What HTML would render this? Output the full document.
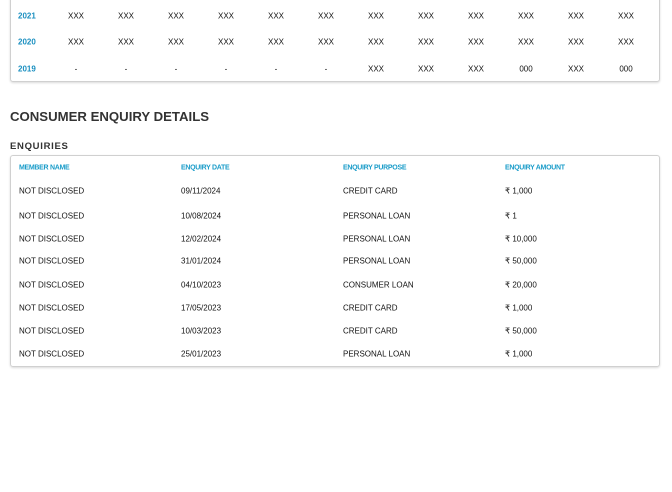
<!DOCTYPE html>
<html><head><style>
body{margin:0;width:672px;height:492px;background:#fff;font-family:"Liberation Sans",sans-serif;position:relative;overflow:hidden}
.box{position:absolute;left:10px;width:648px;border:1px solid #d0d0d0;border-radius:3px;box-shadow:0 1px 2px rgba(0,0,0,.15)}
.t{position:absolute;font-size:8px;color:#111;white-space:nowrap;transform:translateY(-50%)}
.y{color:#1a8fc0;font-weight:bold;left:18px}
.c{transform:translate(-50%,-50%)}
.h{color:#1a9cc9;font-weight:bold;font-size:7px;letter-spacing:-0.3px}
</style></head><body>
<div class="box" style="top:-5px;height:85px"></div>
<div class="box" style="top:155px;height:210px"></div>
<div style="position:absolute;left:10px;top:109px;font-size:13.2px;font-weight:bold;color:#333">CONSUMER ENQUIRY DETAILS</div>
<div style="position:absolute;left:10px;top:141px;font-size:9.5px;font-weight:bold;color:#333;letter-spacing:.7px">ENQUIRIES</div>
<div id="enq"></div>
<script>
var rows=[["2021",16,"XXX XXX XXX XXX XXX XXX XXX XXX XXX XXX XXX XXX"],["2020",42,"XXX XXX XXX XXX XXX XXX XXX XXX XXX XXX XXX XXX"],["2019",69,"- - - - - - XXX XXX XXX 000 XXX 000"]];
var h="";
rows.forEach(function(r){h+='<div class="t y" style="top:'+r[1]+'px">'+r[0]+'</div>';r[2].split(" ").forEach(function(v,i){h+='<div class="t c" style="top:'+r[1]+'px;left:'+(76+50*i)+'px">'+v+'</div>';});});
var xs=[19,181,343,505];
["MEMBER NAME","ENQUIRY DATE","ENQUIRY PURPOSE","ENQUIRY AMOUNT"].forEach(function(v,i){h+='<div class="t h" style="top:168px;left:'+xs[i]+'px">'+v+'</div>';});
var d=[["09/11/2024","CREDIT CARD","₹ 1,000",191],["10/08/2024","PERSONAL LOAN","₹ 1",216],["12/02/2024","PERSONAL LOAN","₹ 10,000",239],["31/01/2024","PERSONAL LOAN","₹ 50,000",261],["04/10/2023","CONSUMER LOAN","₹ 20,000",285],["17/05/2023","CREDIT CARD","₹ 1,000",308],["10/03/2023","CREDIT CARD","₹ 50,000",331],["25/01/2023","PERSONAL LOAN","₹ 1,000",354]];
d.forEach(function(r){var v=["NOT DISCLOSED",r[0],r[1],r[2]];v.forEach(function(s,i){h+='<div class="t" style="top:'+r[3]+'px;left:'+xs[i]+'px">'+s+'</div>';});});
document.getElementById("enq").innerHTML=h;
</script>
</body></html>
